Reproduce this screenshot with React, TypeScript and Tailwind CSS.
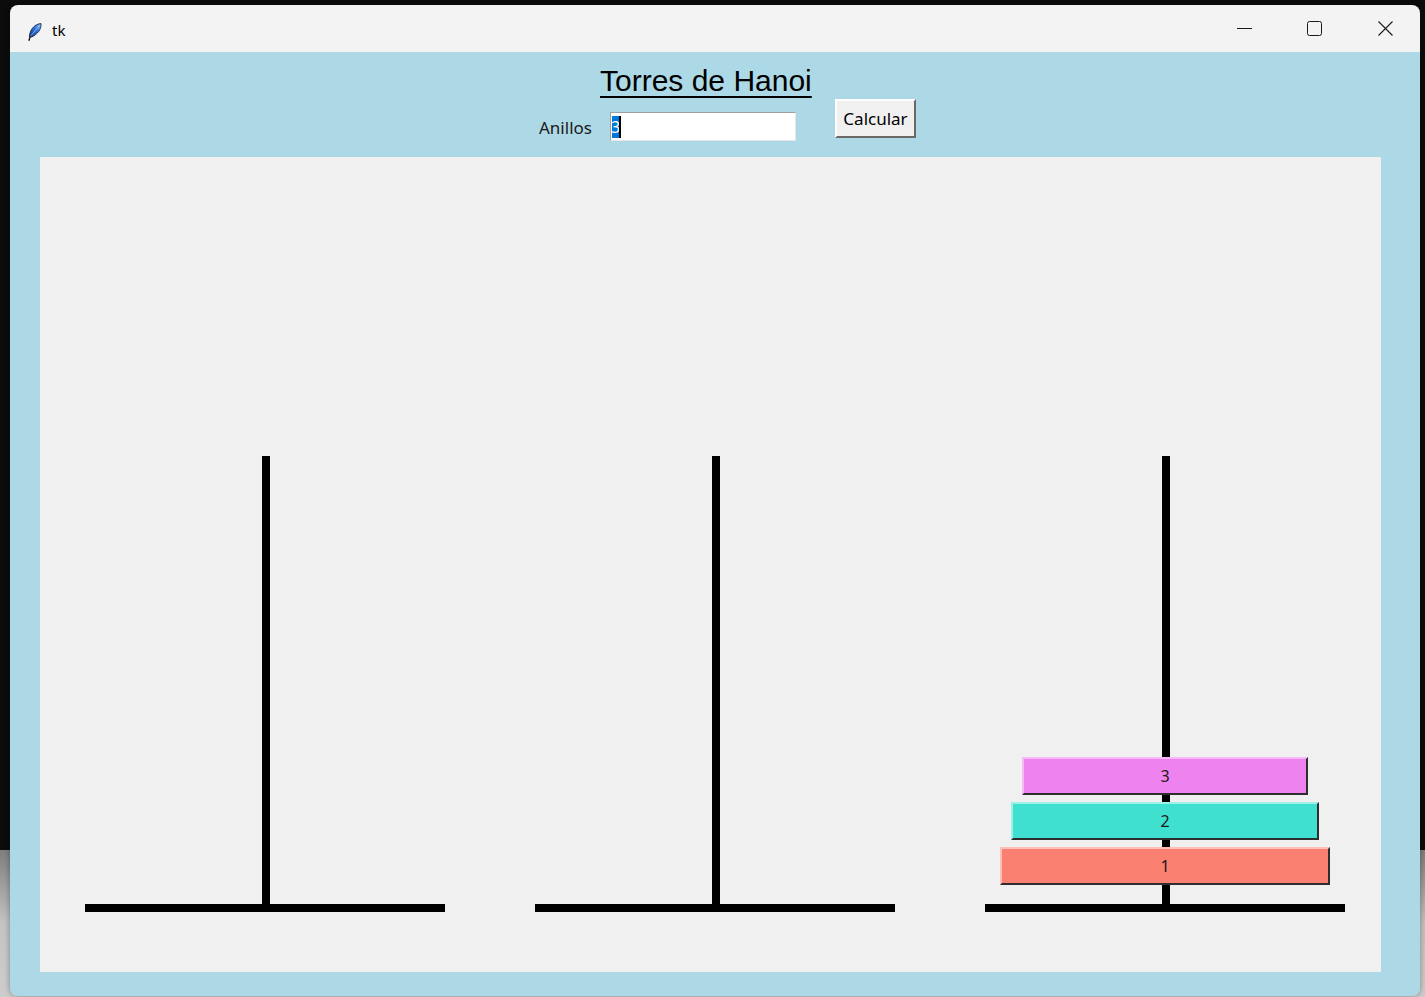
export default function App() {
  const poles = [222, 672, 1122];
  const disks = [
    { n: 3, left: 982, top: 600, w: 286, bg: "bg-[#ee82ee]", light: "border-t-[#f6b8f6] border-l-[#f6b8f6]" },
    { n: 2, left: 971, top: 645, w: 308, bg: "bg-[#40e0d0]", light: "border-t-[#9ff0e8] border-l-[#9ff0e8]" },
    { n: 1, left: 960, top: 690, w: 330, bg: "bg-[#fa8072]", light: "border-t-[#fdbfb8] border-l-[#fdbfb8]" },
  ];

  return (
    <div className="relative w-[1425px] h-[997px] overflow-hidden bg-[#0c0c0c]">
      {/* escritorio detras de la ventana */}
      <div className="flex flex-col h-full">
        <div className="h-[850px] bg-[#0c0c0c]" />
        <div className="flex-1 bg-gradient-to-b from-[#7e7e7e] via-[#c4c4c4] to-[#cdcdcd]" />
      </div>

      {/* ventana tk */}
      <div className="absolute left-[10px] top-[5px] w-[1410px] h-[991px] rounded-[8px] overflow-hidden flex flex-col shadow-[0_0_6px_rgba(0,0,0,0.35)]">
        {/* barra de titulo */}
        <div className="h-[47px] bg-[#f3f3f3] flex items-start shrink-0">
          <svg className="ml-[17px] mt-[18px]" width="15" height="18" viewBox="0 0 15 18">
            <defs>
              <linearGradient id="pluma" x1="1" y1="0" x2="0" y2="1">
                <stop offset="0" stopColor="#9ccaf7" />
                <stop offset="0.4" stopColor="#2f78dc" />
                <stop offset="1" stopColor="#103684" />
              </linearGradient>
            </defs>
            <path d="M14 0.6 C 8.6 1, 3.4 5, 2.3 13.4 L 4.6 14 C 10.8 11, 14.4 6.4, 14 0.6 Z" fill="url(#pluma)" stroke="#17264d" strokeWidth="0.9" />
            <path d="M12.4 2.6 L 3.8 12.8" stroke="#c4dcf8" strokeWidth="0.6" />
            <path d="M3.2 13.6 L 2 17.2" stroke="#111" strokeWidth="1.4" strokeLinecap="round" />
          </svg>
          <span className="ml-[10px] mt-[15px] text-[15px] leading-[20px] text-black font-['Noto_Sans',sans-serif]">tk</span>

          <div className="ml-auto mr-[27px] mt-[16px] flex items-center gap-[54px] h-[15px]">
            <svg width="15" height="15" viewBox="0 0 15 15">
              <path d="M0 7.5 H15" stroke="#1a1a1a" strokeWidth="1" />
            </svg>
            <svg width="15" height="15" viewBox="0 0 15 15" className="ml-[1px]">
              <rect x="0.5" y="0.5" width="14" height="14" rx="2" fill="none" stroke="#1a1a1a" strokeWidth="1" />
            </svg>
            <svg width="15" height="15" viewBox="0 0 15 15" className="ml-[2px]">
              <path d="M0.5 0.5 L14.5 14.5 M14.5 0.5 L0.5 14.5" stroke="#1a1a1a" strokeWidth="1.1" />
            </svg>
          </div>
        </div>

        {/* cuerpo */}
        <div className="flex-1 bg-[#add8e6] flex flex-col">
          <div className="mt-[12px] pl-[590px]">
            <h1 className="inline-block text-[30px] leading-[34px] text-black underline decoration-2 underline-offset-[5px] font-['Liberation_Sans',Arial,sans-serif]">
              Torres de Hanoi
            </h1>
          </div>

          <div className="mt-[1px] pl-[529px] flex items-start font-['Noto_Sans',sans-serif] text-[#1a1a1a]">
            <div className="w-[71px] mt-[19px] text-[17px] leading-[20px]">Anillos</div>
            <div className="mt-[13px] w-[186px] h-[29px] bg-white border border-t-[#a0a0a0] border-l-[#a0a0a0] border-r-[#e6e6e6] border-b-[#e6e6e6] flex items-center pl-[1px]">
              <span className="h-[22px] w-[7px] bg-[#0078d7] text-white text-[16px] leading-[22px] flex justify-center overflow-hidden">3</span>
              <span className="h-[22px] w-[2px] bg-black" />
            </div>
            <button className="ml-[39px] w-[81px] h-[39px] bg-[#f0f0f0] border-2 border-t-white border-l-white border-r-[#696969] border-b-[#696969] text-[17px] leading-[22px] text-black pt-[1px]">
              Calcular
            </button>
          </div>

          {/* lienzo */}
          <div className="mt-[16px] ml-[30px] w-[1341px] h-[815px] bg-[#f0f0f0] relative">
            {poles.map((x) => (
              <div key={x}>
                <div className="absolute top-[299px] w-[8px] h-[456px] bg-black" style={{ left: x }} />
                <div className="absolute top-[747px] w-[360px] h-[8px] bg-black" style={{ left: x - 177 }} />
              </div>
            ))}
            {disks.map((d) => (
              <div
                key={d.n}
                className={`absolute h-[38px] border-2 border-r-[#2e2e2e] border-b-[#2e2e2e] ${d.light} ${d.bg} flex items-center justify-center text-[16px] text-[#1a1a1a] font-['Noto_Sans',sans-serif]`}
                style={{ left: d.left, top: d.top, width: d.w }}
              >
                {d.n}
              </div>
            ))}
          </div>
        </div>
      </div>
    </div>
  );
}
